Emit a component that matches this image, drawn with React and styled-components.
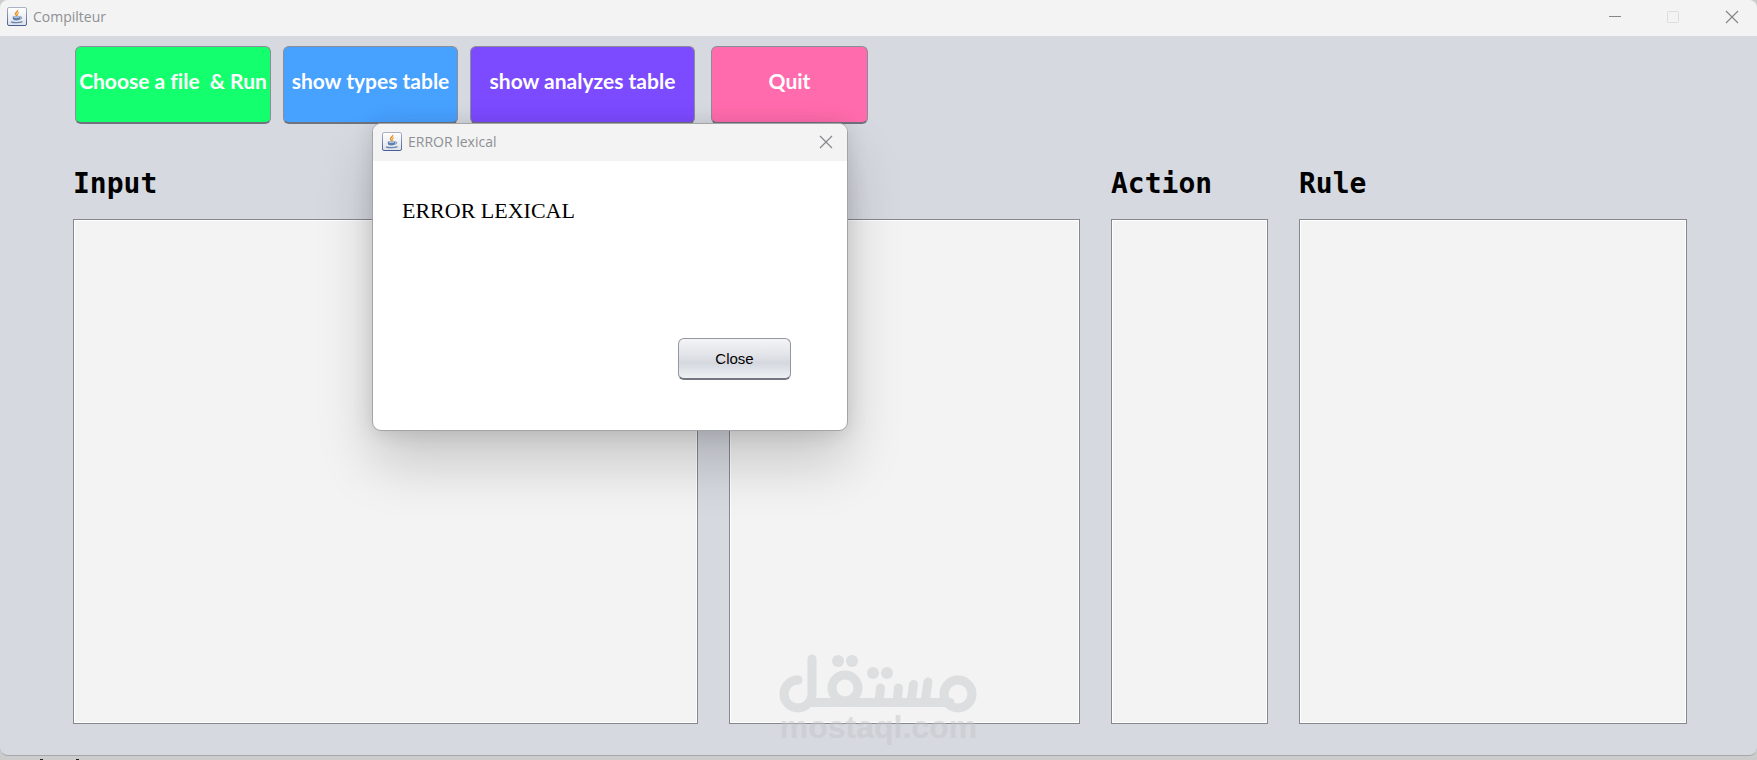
import React, { useState } from 'react';
import styled, { createGlobalStyle } from 'styled-components';

const COLUMNS = [
  { id: 'input', title: 'Input' },
  { id: 'stack', title: 'Stack' },
  { id: 'action', title: 'Action' },
  { id: 'rule', title: 'Rule' },
];

const JavaIcon = () => (
  <svg width="20" height="20" viewBox="0 0 20 20" aria-hidden="true">
    <defs>
      <linearGradient id="javaTile" x1="0" y1="0" x2="0" y2="1">
        <stop offset="0" stopColor="#ffffff" />
        <stop offset="1" stopColor="#dde3ea" />
      </linearGradient>
      <linearGradient id="javaEdge" x1="0" y1="0" x2="0" y2="1">
        <stop offset="0" stopColor="#a9b3c4" />
        <stop offset="1" stopColor="#4a5f95" />
      </linearGradient>
    </defs>
    <rect x="0.5" y="0.5" width="19" height="18" rx="1.5" fill="url(#javaTile)" stroke="url(#javaEdge)" />
    <path d="M10.5 3c1 1.500-2.500 2.500-2 4 .2.900 1 1.200 1.200 2" fill="none" stroke="#e8922a" strokeWidth="1.500" />
    <path d="M12 5.500c-1.500.7-2 1.300-1.500 2.100.3.600.2 1-.3 1.400" fill="none" stroke="#f0a848" strokeWidth="1.100" />
    <path d="M5.800 9.500h7.200v2c0 1.300-1.200 2-3.600 2s-3.600-.7-3.600-2z" fill="#5f7fae" />
    <path d="M13 10c2.400-.5 2.400 1.800-.4 2.300" fill="none" stroke="#5f7fae" />
    <path d="M7 10.500h5" stroke="#c4d2e4" strokeWidth="0.800" />
    <path d="M4 14.800c2.500 1.100 8.500 1.100 11.500-.2" fill="none" stroke="#6b83ad" strokeWidth="1.300" />
  </svg>
);

const CrossIcon = () => (
  <svg width="14" height="14" viewBox="0 0 14 14" aria-hidden="true">
    <path d="M1 1l12 12M13 1L1 13" stroke="#85868a" strokeWidth="1.200" />
  </svg>
);

const Watermark = () => (
  <WatermarkBox>
    <svg width="200" height="60" viewBox="19 12 200 60" aria-hidden="true">
      <g fill="none" stroke="#c8cacd" strokeWidth="9" strokeLinecap="round">
        <path d="M38 39A14 14 0 1 0 52 53V18" />
        <path d="M50 61.500H190" />
        <circle cx="85" cy="47" r="13" />
        <path d="M120.500 47L119 61M138.500 47L137 61M153.500 43.500L151 61M168 41L165 61" />
        <circle cx="198" cy="53" r="14" />
      </g>
      <g fill="#c8cacd">
        <circle cx="78" cy="20" r="6" />
        <circle cx="92" cy="20" r="6" />
        <circle cx="113" cy="32" r="6" />
        <circle cx="127" cy="32" r="6" />
      </g>
    </svg>
    <WatermarkText>mostaql.com</WatermarkText>
  </WatermarkBox>
);

const ErrorDialog = ({ onClose }) => (
  <Dialog role="dialog" aria-labelledby="dialog-title">
    <DialogBar>
      <JavaIcon />
      <BarTitle id="dialog-title">ERROR lexical</BarTitle>
      <DialogCross type="button" aria-label="Close dialog" onClick={onClose}>
        <CrossIcon />
      </DialogCross>
    </DialogBar>
    <DialogBody>
      <Message>ERROR LEXICAL</Message>
      <CloseButton type="button" onClick={onClose}>
        Close
      </CloseButton>
    </DialogBody>
  </Dialog>
);

export default function App() {
  const [showError, setShowError] = useState(true);

  return (
    <Desktop>
      <GlobalStyle />
      <Window>
        <TitleBar>
          <JavaIcon />
          <BarTitle>Compilteur</BarTitle>
          <WindowControls>
            <ControlButton type="button" aria-label="Minimize">
              <svg width="12" height="12" viewBox="0 0 12 12">
                <path d="M0 5.500h12" stroke="#85868a" />
              </svg>
            </ControlButton>
            <ControlButton type="button" aria-label="Maximize" disabled>
              <svg width="12" height="12" viewBox="0 0 12 12">
                <rect x="0.500" y="0.500" width="11" height="11" rx="1" fill="none" stroke="#dcdcdc" />
              </svg>
            </ControlButton>
            <ControlButton type="button" aria-label="Close">
              <CrossIcon />
            </ControlButton>
          </WindowControls>
        </TitleBar>

        <Content>
          <Toolbar>
            <ActionButton type="button" bg="#14ff6e" width="196px" onClick={() => setShowError(true)}>
              {'Choose a file  & Run'}
            </ActionButton>
            <ActionButton type="button" bg="#47a1ff" width="175px">
              show types table
            </ActionButton>
            <ActionButton type="button" bg="#7c4aff" width="225px">
              show analyzes table
            </ActionButton>
            <ActionButton type="button" bg="#ff6bac" width="157px">
              Quit
            </ActionButton>
          </Toolbar>

          <Columns>
            {COLUMNS.map(({ id, title }) => (
              <Column key={id}>
                <ColumnTitle htmlFor={id}>{title}</ColumnTitle>
                <Output id={id} readOnly />
              </Column>
            ))}
          </Columns>
        </Content>
        <Watermark />
      </Window>
      <Behind width="120" height="4" viewBox="0 0 120 4" aria-hidden="true">
        <path d="M40 3.500h3M76 3.500h3" stroke="#1c1c1c" />
      </Behind>
      {showError ? <ErrorDialog onClose={() => setShowError(false)} /> : null}
    </Desktop>
  );
}

/******************** styled components ************************/

const GlobalStyle = createGlobalStyle`
  * {
    box-sizing: border-box;
  }
  body {
    margin: 0;
    background: #cccccc;
    font-family: 'Liberation Sans', Arial, sans-serif;
  }
`;

const Desktop = styled.div`
  position: relative;
  display: flex;
  flex-direction: column;
  min-height: 100vh;
  overflow: hidden;
`;

const Window = styled.main`
  position: relative;
  flex: 1;
  display: flex;
  flex-direction: column;
  background: #d6d9e0;
  border-bottom: 1px solid #a6a7aa;
  border-radius: 8px;
  overflow: hidden;
`;

const Bar = styled.header`
  display: flex;
  align-items: center;
  gap: 6px;
  background: #f3f3f3;
`;

const TitleBar = styled(Bar)`
  height: 36px;
  padding: 0 18px 2px 7px;
`;

const BarTitle = styled.span`
  color: #8f9093;
  font: 14px/20px 'Open Sans', 'Noto Sans', sans-serif;
`;

const WindowControls = styled.div`
  display: flex;
  gap: 46px;
  margin-left: auto;
`;

const ControlButton = styled.button`
  display: flex;
  align-items: center;
  padding: 0;
  border: 0;
  background: none;
`;

const Content = styled.div`
  flex: 1;
  display: flex;
  flex-direction: column;
  padding: 10px 70px 31px 73px;
`;

const Toolbar = styled.div`
  display: flex;
  gap: 12px;
  padding-left: 2px;
`;

const ActionButton = styled.button`
  width: ${({ width }) => width};
  height: 78px;
  padding: 0 0 8px;
  border: 1px solid #8b8d98;
  border-bottom: 2px solid #70727e;
  border-radius: 6px;
  background: ${({ bg }) => bg};
  color: #ffffff;
  font: bold 21px/24px Lato, Carlito, sans-serif;
  font-variant-ligatures: none;
  white-space: pre;

  &:last-child {
    margin-left: 4px;
  }
`;

const Columns = styled.div`
  flex: 1;
  display: grid;
  grid-template-columns: 625fr 351fr 157fr 388fr;
  gap: 31px;
  padding-top: 40px;
`;

const Column = styled.section`
  display: flex;
  flex-direction: column;
  gap: 15px;
  min-width: 0;
`;

const ColumnTitle = styled.label`
  color: #000000;
  font: bold 28px/40px 'DejaVu Sans Mono', Consolas, monospace;
`;

const Output = styled.textarea`
  flex: 1;
  width: 100%;
  border: 1px solid #85878f;
  border-radius: 0;
  outline: none;
  box-shadow: inset 0 0 0 1px #ffffff;
  background: #f3f3f3;
  resize: none;
`;

const WatermarkBox = styled.div`
  position: absolute;
  bottom: 14px;
  left: 50%;
  display: flex;
  flex-direction: column;
  align-items: center;
  transform: translateX(-50%);
  opacity: 0.5;
  pointer-events: none;
`;

const WatermarkText = styled.span`
  color: #c6c7c9;
  font: bold 32px/28px 'Liberation Sans', Arial, sans-serif;
`;

const Behind = styled.svg`
  display: block;
`;

const Dialog = styled.div`
  position: absolute;
  top: 123px;
  left: 372px;
  width: 476px;
  border: 1px solid #a3a4a6;
  border-radius: 9px;
  background: #ffffff;
  box-shadow: 0 32px 56px rgba(0, 0, 0, 0.18), 0 2px 20px rgba(0, 0, 0, 0.12);
  overflow: hidden;
`;

const DialogBar = styled(Bar)`
  height: 37px;
  padding: 0 14px 1px 9px;
`;

const DialogCross = styled(ControlButton)`
  margin-left: auto;
`;

const DialogBody = styled.div`
  display: flex;
  flex-direction: column;
  padding: 37px 56px 50px 29px;
`;

const Message = styled.p`
  margin: 0 0 114px;
  color: #000000;
  font: 22px/26px 'Liberation Serif', 'Times New Roman', serif;
`;

const CloseButton = styled.button`
  align-self: flex-end;
  width: 113px;
  height: 42px;
  border: 1px solid #9496a0;
  border-bottom: 2px solid #74767f;
  border-radius: 6px;
  background: linear-gradient(#f4f4f6, #e3e4e9 40%, #d5d8df 62%, #eef1f3);
  color: #000000;
  font: 15px/20px 'Liberation Sans', Arial, sans-serif;
`;
